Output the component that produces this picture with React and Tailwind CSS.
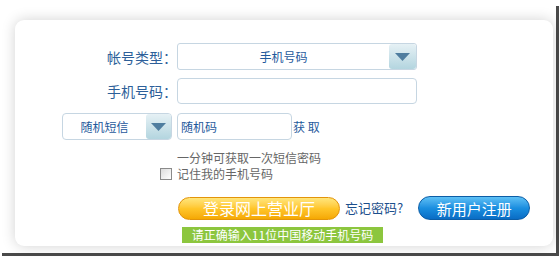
import React from "react";

const font = { fontFamily: '"Noto Sans CJK SC", "Noto Sans", sans-serif' };

function Arrow() {
  return (
    <svg width="15" height="8" viewBox="0 0 15 8">
      <polygon points="0,0 15,0 7.5,8" fill="#4f7d9f" />
    </svg>
  );
}

function DropBtn({ w }) {
  return (
    <div
      className={`flex h-full items-center justify-center rounded-[3px] bg-gradient-to-b from-[#e6f1f5] to-[#b3d5df] ${w}`}
    >
      <Arrow />
    </div>
  );
}

export default function App() {
  return (
    <div className="h-[259px] w-[560px] overflow-hidden bg-white" style={font}>
      <div className="ml-[2px] mt-[6px] h-[250px] w-[557px] border-b-[3px] border-r-[3px] border-[#4a4a4a] bg-white pl-[13px] pt-[14px]">
        <div className="h-[226px] w-[538px] rounded-[9px] bg-white shadow-[0_0_14px_rgba(0,0,0,0.18)]">
          <div className="flex flex-col pt-[23px]">
            {/* Row 1 */}
            <div className="flex h-[27px] items-center">
              <div className="w-[162px] text-right text-[14px] leading-none text-[#2d5f99]">帐号类型：</div>
              <div className="flex h-[27px] w-[240px] items-stretch rounded-[3px] border border-[#c6d6e2] bg-white">
                <div className="flex flex-1 items-center justify-center text-[12px] text-[#1f5a9c]">手机号码</div>
                <DropBtn w="w-[27px]" />
              </div>
            </div>
            {/* Row 2 */}
            <div className="mt-[8px] flex h-[26px] items-center">
              <div className="w-[162px] text-right text-[14px] leading-none text-[#2d5f99]">手机号码：</div>
              <div className="h-[26px] w-[240px] rounded-[4px] border border-[#c6d6e2] bg-white" />
            </div>
            {/* Row 3 */}
            <div className="mt-[9px] flex h-[27px] items-center">
              <div className="ml-[47px] flex h-[27px] w-[110px] items-stretch rounded-[4px] border border-[#c6d6e2] bg-white">
                <div className="flex flex-1 items-center justify-center text-[12px] text-[#1f5a9c]">随机短信</div>
                <DropBtn w="w-[25px]" />
              </div>
              <div className="ml-[5px] flex h-[27px] w-[115px] items-center rounded-[4px] border border-[#c6d6e2] bg-white pl-[3px] text-[12px] text-[#1f5a9c]">
                随机码
              </div>
              <div className="ml-[1px] text-[12px] text-[#1f5a9c]">获 取</div>
            </div>
            {/* Row 4 */}
            <div className="mt-[10px] flex flex-col text-[12px] leading-[16px] text-[#666666]">
              <div className="pl-[162px]">一分钟可获取一次短信密码</div>
              <div className="flex items-center">
                <div className="ml-[145px] mr-[5px] h-[12px] w-[12px] border border-[#8a8a8a] bg-gradient-to-br from-[#dcdcdc] to-[#ffffff]" />
                <span>记住我的手机号码</span>
              </div>
            </div>
            {/* Row 5 */}
            <div className="mt-[14px] flex h-[24px] items-center">
              <div className="ml-[163px] flex h-[23px] w-[162px] items-center justify-center rounded-full border border-[#e3940a] bg-gradient-to-b from-[#ffe67a] via-[#ffc629] to-[#f5a800] text-[16px] leading-none text-white">
                登录网上营业厅
              </div>
              <div className="ml-[5px] text-[13px] text-[#1c4f8c]">忘记密码?</div>
              <div className="ml-[15px] flex h-[24px] w-[112px] items-center justify-center rounded-full border border-[#0c5da6] bg-gradient-to-b from-[#5cc0f5] via-[#1a8fe0] to-[#0a6cc4] text-[15px] leading-none text-white">
                新用户注册
              </div>
            </div>
            {/* Row 6 */}
            <div className="ml-[167px] mt-[7px] flex h-[16px] w-[201px] items-center justify-center bg-[#8cc63e] text-[12px] leading-none text-white">
              请正确输入11位中国移动手机号码
            </div>
          </div>
        </div>
      </div>
    </div>
  );
}
